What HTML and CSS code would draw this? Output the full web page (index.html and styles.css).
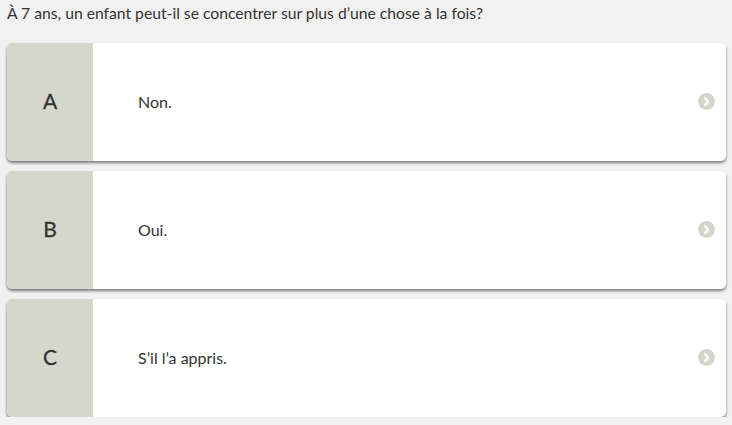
FILE: index.html
```html
<!DOCTYPE html>
<html lang="fr">
<head>
<meta charset="utf-8">
<link rel="stylesheet" href="styles.css">
</head>
<body>
<div class="page">
  <p class="question">À 7 ans, un enfant peut-il se concentrer sur plus d’une chose à la fois?</p>
  <div class="answers">
    <div class="card">
      <div class="letter">A</div>
      <div class="text">Non.</div>
      <span class="go"><svg viewBox="0 0 16 16" width="17" height="17"><circle cx="8" cy="8" r="8" fill="#d5d7cc"/><path d="M6.6 4.8 9.6 8 6.6 11.2" fill="none" stroke="#fff" stroke-width="2.2" stroke-linecap="round" stroke-linejoin="round"/></svg></span>
    </div>
    <div class="card">
      <div class="letter">B</div>
      <div class="text">Oui.</div>
      <span class="go"><svg viewBox="0 0 16 16" width="17" height="17"><circle cx="8" cy="8" r="8" fill="#d5d7cc"/><path d="M6.6 4.8 9.6 8 6.6 11.2" fill="none" stroke="#fff" stroke-width="2.2" stroke-linecap="round" stroke-linejoin="round"/></svg></span>
    </div>
    <div class="card">
      <div class="letter">C</div>
      <div class="text">S’il l’a appris.</div>
      <span class="go"><svg viewBox="0 0 16 16" width="17" height="17"><circle cx="8" cy="8" r="8" fill="#d5d7cc"/><path d="M6.6 4.8 9.6 8 6.6 11.2" fill="none" stroke="#fff" stroke-width="2.2" stroke-linecap="round" stroke-linejoin="round"/></svg></span>
    </div>
  </div>
</div>
</body>
</html>
```
FILE: styles.css
```css
html, body {
  margin: 0;
  padding: 0;
  background: #f1f1f1;
}
body {
  font-family: Lato, "Open Sans", sans-serif;
  color: #333;
}
.page {
  padding: 3px 6px 0 7px;
}
.question {
  margin: 0;
  font-size: 15.7px;
  line-height: 20px;
  color: #333;
}
.answers {
  margin-top: 20px;
  display: flex;
  flex-direction: column;
  gap: 10px;
}
.card {
  display: flex;
  align-items: center;
  height: 118px;
  background: #fff;
  border-radius: 5px;
  overflow: hidden;
  box-shadow: 0 2px 3px rgba(0,0,0,0.5);
}
.letter {
  width: 86px;
  align-self: stretch;
  display: flex;
  align-items: center;
  justify-content: center;
  padding-bottom: 4px;
  box-sizing: border-box;
  background: #d5d7cc;
  font-size: 21px;
  color: #333;
  -webkit-text-stroke: 0.3px #333;
}
.text {
  flex: 1;
  padding-left: 45px;
  padding-bottom: 2px;
  font-size: 16px;
  color: #333;
}
.go {
  display: flex;
  margin-right: 11px;
  margin-bottom: 2px;
}
```
